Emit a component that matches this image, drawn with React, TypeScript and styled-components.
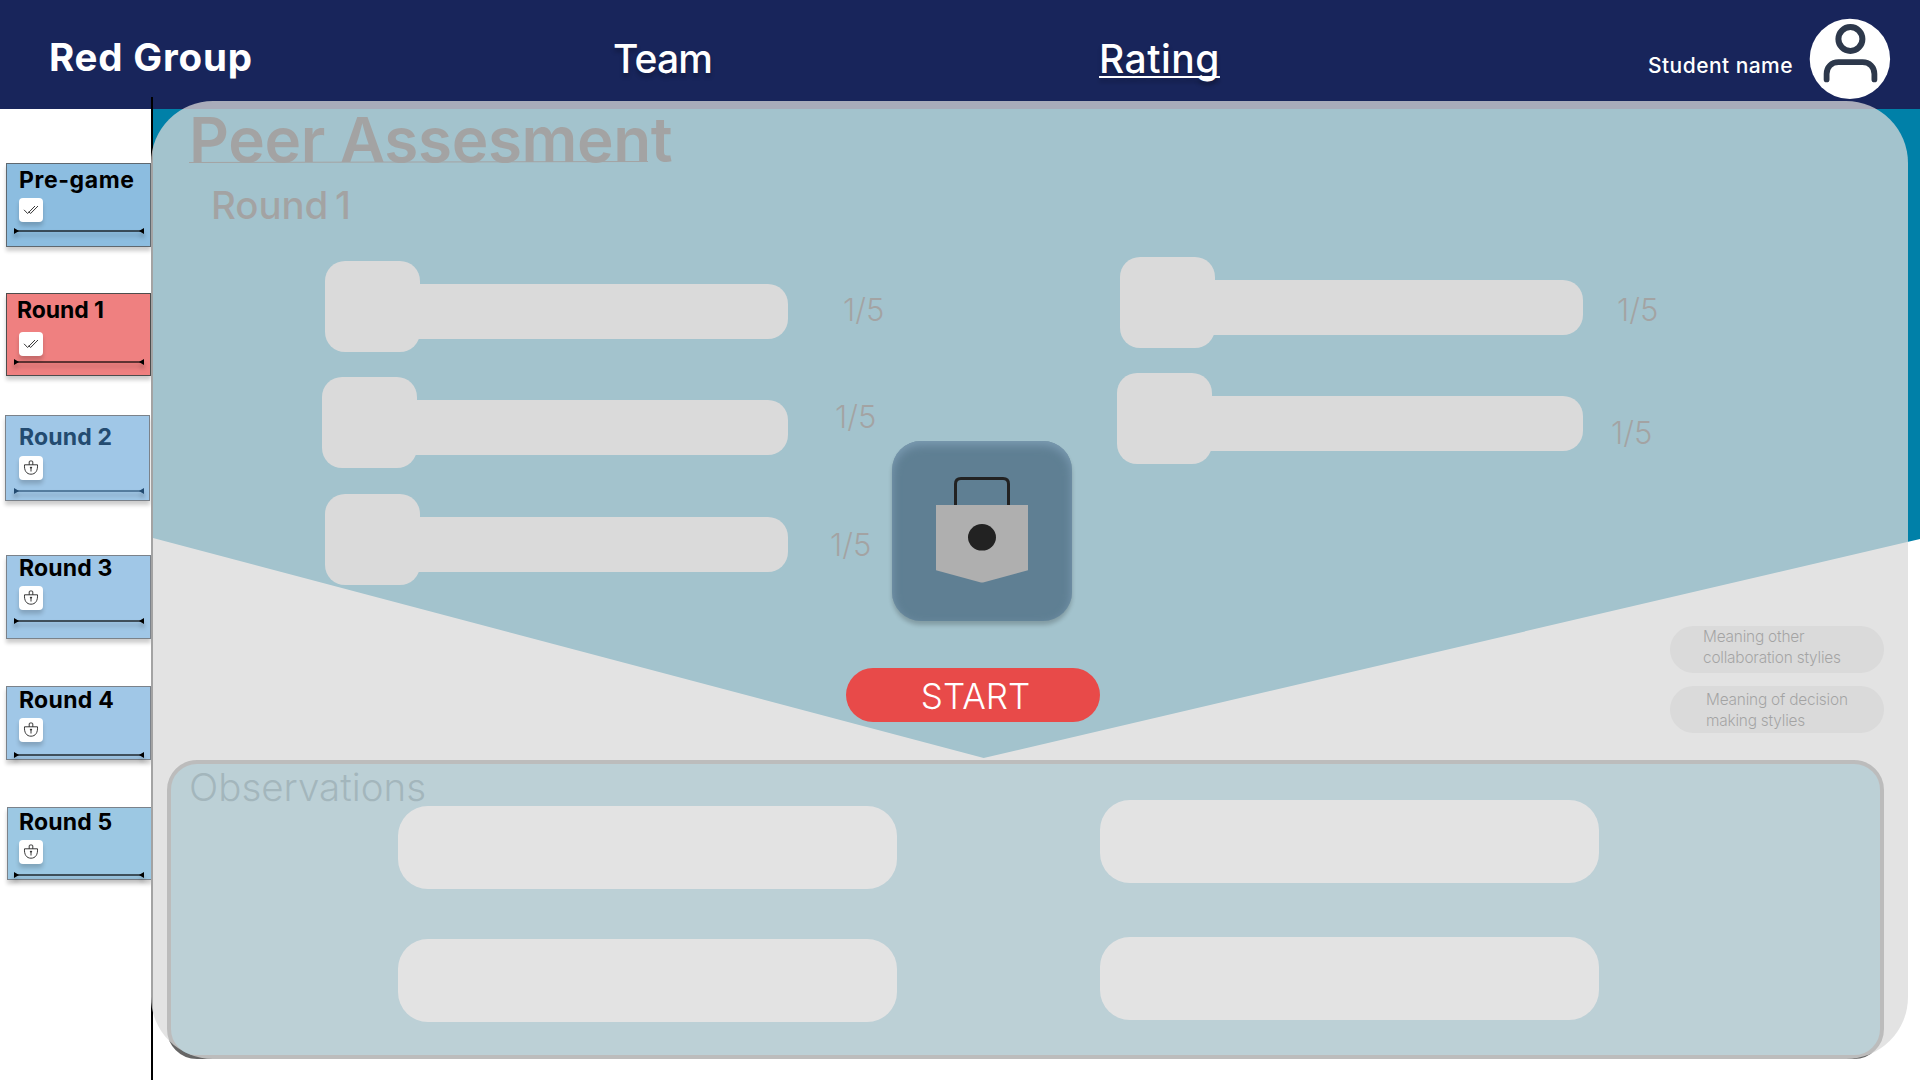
import React from "react";
import styled, { createGlobalStyle } from "styled-components";

const GlobalStyle = createGlobalStyle`
  * { box-sizing: border-box; }
  body { margin: 0; background: #fff; font-family: Inter, "Open Sans", sans-serif; }
`;

const Page = styled.div`
  position: relative;
  display: flex;
  flex-direction: column;
  width: 1920px;
  height: 1080px;
  overflow: hidden;
  background: #fff;
`;

const Header = styled.header`
  display: grid;
  grid-template-columns: 613px 486px 549px 161px auto;
  height: 109px;
  background: #18255b;
  color: #fff;
`;

const GroupName = styled.div`
  padding-left: 49px;
  font-size: 38.5px;
  font-weight: 700;
  line-height: 114px;
  white-space: nowrap;
  letter-spacing: 0.8px;
`;

const NavLink = styled.a<{ $active?: boolean }>`
  justify-self: start;
  font-size: 39px;
  font-weight: 500;
  line-height: 118px;
  height: 109px;
  white-space: nowrap;
  letter-spacing: ${(p) => (p.$active ? "0.5px" : "-0.9px")};
  text-shadow: 0 4px 4px rgba(0, 0, 0, 0.25);
  text-decoration: ${(p) => (p.$active ? "underline" : "none")};
  text-decoration-thickness: 2px;
  text-underline-offset: 3px;
  text-decoration-skip-ink: none;
`;

const StudentName = styled.div`
  font-size: 21px;
  font-weight: 500;
  line-height: 131px;
  height: 109px;
  letter-spacing: 0.45px;
  white-space: nowrap;
`;

const Avatar = styled.svg`
  display: block;
  width: 82px;
  height: 82px;
  margin-top: 18px;
`;

const Body = styled.div`
  display: flex;
  height: 971px;
`;

const Sidebar = styled.nav`
  width: 151px;
  height: 971px;
  overflow: hidden;
`;

const Divider = styled.div`
  position: relative;
  width: 2px;
  height: 983px;
  margin-top: -12px;
  background: #000;
`;

const Card = styled.div<{ $left: number; $gap: number; $height: number; $bg: string; $edge: string }>`
  display: flex;
  flex-direction: column;
  width: 145px;
  height: ${(p) => p.$height}px;
  margin: ${(p) => p.$gap}px 0 0 ${(p) => p.$left}px;
  border: 1px solid ${(p) => p.$edge};
  background: ${(p) => p.$bg};
  box-shadow: 0 4px 4px rgba(0, 0, 0, 0.2);
`;

const CardTitle = styled.div<{ $x: number; $top: number; $tone: string; $track: number }>`
  height: 20px;
  margin: ${(p) => p.$top}px 0 0 ${(p) => p.$x}px;
  color: ${(p) => p.$tone};
  font-size: 23px;
  font-weight: 700;
  line-height: 20px;
  letter-spacing: ${(p) => p.$track}px;
  white-space: nowrap;
`;

const Chip = styled.div<{ $x: number; $top: number }>`
  flex: none;
  width: 24px;
  height: 24px;
  margin: ${(p) => p.$top}px 0 0 ${(p) => p.$x}px;
  border-radius: 4px;
  background: #fff;
  box-shadow: 0 4px 4px rgba(0, 0, 0, 0.18);
`;

const Track = styled.svg<{ $x: number; $top: number }>`
  display: block;
  flex: none;
  width: 130px;
  height: 6px;
  margin: ${(p) => p.$top}px 0 0 ${(p) => p.$x}px;
  overflow: visible;
  filter: drop-shadow(0 4px 2px rgba(0, 0, 0, 0.3));
`;

const Main = styled.main`
  position: relative;
  width: 1767px;
  height: 971px;

  &::before {
    content: "";
    position: absolute;
    inset: 0;
    background: #0080a8;
    clip-path: polygon(0 0, 100% 0, 100% 430px, 830.7px 649px, 0 429px);
  }
`;

const Content = styled.div`
  position: relative;
`;

const Title = styled.h1`
  position: relative;
  height: 61px;
  margin: 0;
  padding-left: 36px;
  font-size: 62px;
  font-weight: 600;
  line-height: 61px;
  letter-spacing: -0.4px;
  white-space: nowrap;
`;

const TitleRule = styled.svg`
  position: absolute;
  left: 36px;
  top: 51px;
  width: 460px;
  height: 4px;
`;

const RoundHeading = styled.h2`
  height: 48px;
  margin: 11px 0 0;
  padding-left: 58px;
  font-size: 38.5px;
  font-weight: 500;
  line-height: 48px;
  letter-spacing: -0.1px;
  word-spacing: -3.5px;
  white-space: nowrap;
`;

const Ratings = styled.section`
  display: flex;
  height: 397px;
`;

const RatingColumn = styled.div<{ $width: number; $padTop: number; $padLeft: number }>`
  width: ${(p) => p.$width}px;
  padding: ${(p) => p.$padTop}px 0 0 ${(p) => p.$padLeft}px;
`;

const RatingRow = styled.div<{ $gap: number; $shift: number }>`
  display: flex;
  align-items: flex-start;
  height: 91px;
  margin: ${(p) => p.$gap}px 0 0 ${(p) => p.$shift}px;
`;

const Thumb = styled.div`
  width: 95px;
  height: 91px;
  border-radius: 20px;
  background: #d9d9d9;
`;

const Bar = styled.div<{ $width: number }>`
  width: ${(p) => p.$width}px;
  height: 55px;
  margin: 23px 0 0 -20px;
  border-radius: 0 20px 20px 0;
  background: #d9d9d9;
`;

const Score = styled.div<{ $left: number; $drop: number }>`
  margin: ${(p) => p.$drop}px 0 0 ${(p) => p.$left}px;
  font-size: 31px;
  font-weight: 300;
  line-height: 91px;
  white-space: nowrap;
`;

const Legend = styled.div`
  display: flex;
  flex-direction: column;
  align-items: flex-end;
  gap: 13px;
  padding-right: 36px;
`;

const LegendPill = styled.div<{ $left: number; $top: number }>`
  width: 214px;
  height: 47px;
  padding: ${(p) => p.$top}px 0 0 ${(p) => p.$left}px;
  border-radius: 24px;
  background: #d9d9d9;
  font-size: 15.4px;
  font-weight: 300;
  line-height: 21px;
  letter-spacing: -0.2px;
  white-space: nowrap;
`;

const Observations = styled.section`
  width: 1717px;
  height: 299px;
  margin: 27px 0 0 14px;
  border: 4px solid #666;
  border-radius: 30px;
  background: #66b2cb;
`;

const ObservationsTitle = styled.h2`
  height: 36px;
  margin: 0;
  padding-left: 18px;
  color: #004c65;
  font-size: 38.5px;
  font-weight: 300;
  line-height: 47px;
  white-space: nowrap;
`;

const NoteGrid = styled.div`
  display: flex;
  gap: 203px;
  padding-left: 227px;
`;

const NoteColumn = styled.div<{ $top: number; $gap: number }>`
  display: flex;
  flex-direction: column;
  gap: ${(p) => p.$gap}px;
  margin-top: ${(p) => p.$top}px;
`;

const Note = styled.div`
  width: 499px;
  height: 83px;
  border-radius: 30px;
  background: #fff;
`;

const Overlay = styled.div`
  position: absolute;
  left: 151px;
  top: 101px;
  display: flex;
  flex-direction: column;
  align-items: flex-start;
  width: 1757px;
  height: 958px;
  border-radius: 62px;
  background: rgba(217, 217, 217, 0.75);
`;

const LockTile = styled.div`
  width: 180px;
  height: 180px;
  margin: 340px 0 0 741px;
  border-radius: 29px;
  background: #5f7f93;
  box-shadow: 0 4px 4px rgba(0, 0, 0, 0.2), inset 0 4px 10px #7c9cb3;
`;

const StartButton = styled.button`
  width: 254px;
  height: 54px;
  margin: 47px 0 0 695px;
  padding: 1px 0 0 5px;
  border: 0;
  border-radius: 27px;
  background: #e84a49;
  color: #fff;
  font-family: inherit;
  font-size: 35px;
  font-weight: 300;
  line-height: 50px;
  white-space: nowrap;
`;

type Round = {
  name: string; left: number; gap: number; height: number; bg: string; edge: string;
  x: number; titleTop: number; chipTop: number; trackTop: number; done?: boolean; tone?: string; track: number;
};

const rounds: Round[] = [
  { name: "Pre-game", left: 6, gap: 54, height: 84, bg: "#8cbde0", edge: "#5f686f", x: 19, titleTop: 6, chipTop: 8, trackTop: 6, done: true, track: 0.6 },
  { name: "Round 1", left: 6, gap: 46, height: 83, bg: "#ef8080", edge: "#4d4d4d", x: 17, titleTop: 6, chipTop: 12, trackTop: 3, done: true, track: -0.1 },
  { name: "Round 2", left: 5, gap: 39, height: 86, bg: "#a0c7e7", edge: "#7b828a", x: 19, titleTop: 11, chipTop: 9, trackTop: 8, tone: "#234b70", track: 0.15 },
  { name: "Round 3", left: 6, gap: 54, height: 84, bg: "#a0c7e7", edge: "#7b828a", x: 19, titleTop: 2, chipTop: 8, trackTop: 8, track: 0.15 },
  { name: "Round 4", left: 6, gap: 47, height: 74, bg: "#a0c7e7", edge: "#7b828a", x: 19, titleTop: 3, chipTop: 8, trackTop: 10, track: 0.3 },
  { name: "Round 5", left: 7, gap: 47, height: 73, bg: "#9cc8e3", edge: "#7b828a", x: 19, titleTop: 4, chipTop: 8, trackTop: 8, track: 0.15 },
];

const DoubleCheck = () => (
  <svg width="24" height="24" viewBox="0 0 24 24" fill="none" stroke="#222" strokeWidth="0.9">
    <path d="M5 11.8 L8.6 15.5 L16 8 M9.8 13.7 L11.6 15.5 L19 8" />
  </svg>
);

const SmallLock = () => (
  <svg width="24" height="24" viewBox="0 0 24 24" fill="none" stroke="#222" strokeWidth="0.9">
    <path d="M5.5 8.8 H18.5 C18.9 14.6 16.5 18.2 12 18.2 C7.5 18.2 5.1 14.6 5.5 8.8 Z" />
    <path d="M10.2 8.8 V6 Q10.2 5 11.2 5 H12.8 Q13.8 5 13.8 6 V8.8" />
    <path d="M12 11.5 V15.5" />
    <circle cx="12" cy="11.6" r="0.6" fill="#222" />
  </svg>
);

const RoundCard = ({ r }: { r: Round }) => {
  const tone = r.tone ?? "#000";
  const inset = r.left + 1;
  return (
    <Card $left={r.left} $gap={r.gap} $height={r.height} $bg={r.bg} $edge={r.edge}>
      <CardTitle $x={r.x - inset} $top={r.titleTop} $tone={tone} $track={r.track}>{r.name}</CardTitle>
      <Chip $x={19 - inset} $top={r.chipTop}>{r.done ? <DoubleCheck /> : <SmallLock />}</Chip>
      <Track $x={14 - inset} $top={r.trackTop} viewBox="0 0 130 6">
        <path d="M2 3 H128" stroke={tone} strokeOpacity="0.6" strokeWidth="2" />
        <path d="M0 0 L5 3 L0 6 Z M130 0 L125 3 L130 6 Z" fill={tone} />
      </Track>
    </Card>
  );
};

const Rating = ({ gap = 0, shift = 0, bar, left, drop }: { gap?: number; shift?: number; bar: number; left: number; drop: number }) => (
  <RatingRow $gap={gap} $shift={shift}>
    <Thumb />
    <Bar $width={bar} />
    <Score $left={left} $drop={drop}>1/5</Score>
  </RatingRow>
);

export default function App() {
  return (
    <Page>
      <GlobalStyle />
      <Header>
        <GroupName>Red Group</GroupName>
        <NavLink>Team</NavLink>
        <NavLink $active>Rating</NavLink>
        <StudentName>Student name</StudentName>
        <Avatar viewBox="0 0 82 82" fill="none">
          <circle cx="40.9" cy="40.9" r="40.2" fill="#fff" />
          <circle cx="41.4" cy="21" r="12" stroke="#2d384b" strokeWidth="6" />
          <path d="M17.6 61.4 V56 C17.6 49 22.5 44.2 29.5 44.2 H53.5 C60.5 44.2 65.4 49 65.4 56 V61.4" stroke="#2d384b" strokeWidth="5.8" strokeLinecap="round" />
        </Avatar>
      </Header>
      <Body>
        <Sidebar>
          {rounds.map((r) => <RoundCard key={r.name} r={r} />)}
        </Sidebar>
        <Divider />
        <Main>
          <Content>
            <Title>
              Peer Assesment
              <TitleRule viewBox="0 0 460 4">
                <path d="M0 2.5 L459 1.5" stroke="#000" strokeWidth="1" />
              </TitleRule>
            </Title>
            <RoundHeading>Round 1</RoundHeading>
            <Ratings>
              <RatingColumn $width={840} $padTop={32} $padLeft={172}>
                <Rating bar={388} left={55} drop={3} />
                <Rating gap={25} shift={-3} bar={391} left={47} drop={-6} />
                <Rating gap={26} bar={388} left={42} drop={5} />
              </RatingColumn>
              <RatingColumn $width={927} $padTop={28} $padLeft={127}>
                <Rating bar={388} left={34} drop={7} />
                <Rating gap={25} shift={-3} bar={391} left={28} drop={14} />
              </RatingColumn>
            </Ratings>
            <Legend>
              <LegendPill $left={33} $top={0}>Meaning other<br />collaboration stylies</LegendPill>
              <LegendPill $left={36} $top={3}>Meaning of decision<br />making stylies</LegendPill>
            </Legend>
            <Observations>
              <ObservationsTitle>Observations</ObservationsTitle>
              <NoteGrid>
                <NoteColumn $top={6} $gap={50}><Note /><Note /></NoteColumn>
                <NoteColumn $top={0} $gap={54}><Note /><Note /></NoteColumn>
              </NoteGrid>
            </Observations>
          </Content>
        </Main>
      </Body>
      <Overlay>
        <LockTile>
          <svg width="180" height="180" viewBox="0 0 180 180" fill="none">
            <path d="M63.5 66 V43 Q63.5 37.5 69 37.5 H111 Q116.5 37.5 116.5 43 V66" stroke="#222" strokeWidth="3" />
            <path d="M44 64 H136 V129.3 L92 141.2 Q90 141.8 88 141.2 L44 129.3 Z" fill="#afafaf" />
            <ellipse cx="90" cy="96.3" rx="14" ry="13.3" fill="#222" />
          </svg>
        </LockTile>
        <StartButton>START</StartButton>
      </Overlay>
    </Page>
  );
}
